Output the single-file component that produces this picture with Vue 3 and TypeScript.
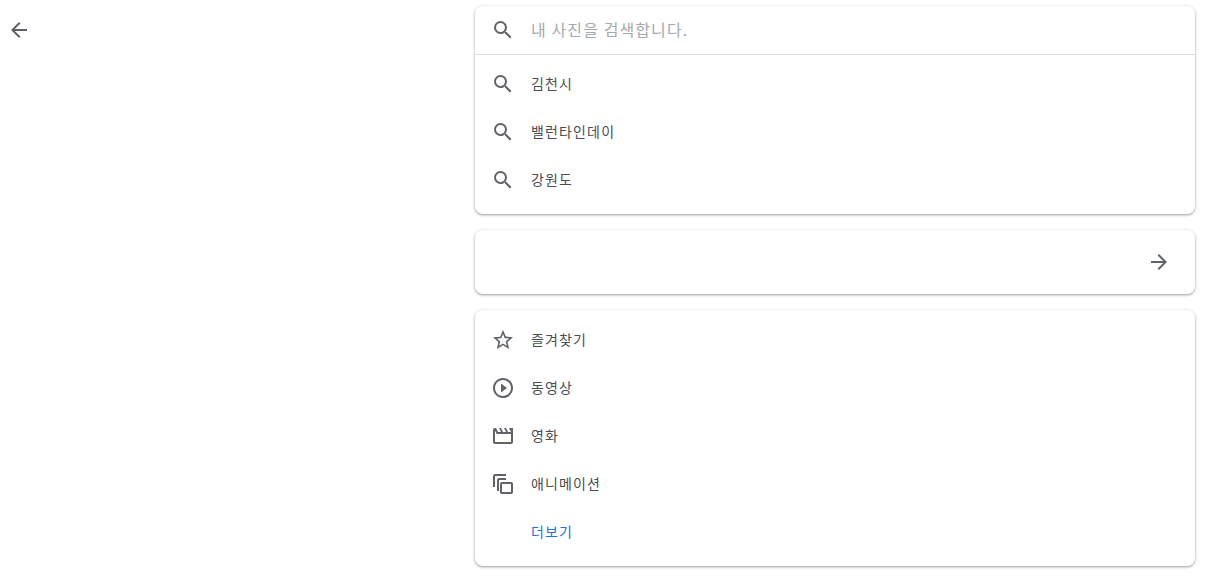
<template>
  <div class="page">
    <div class="back-col">
      <svg class="icon" viewBox="0 0 24 24"><path :d="ICONS.back" /></svg>
    </div>
    <div class="cards">
      <section class="card search-card">
        <div class="search-head">
          <svg class="icon" viewBox="0 0 24 24"><path :d="ICONS.search" /></svg>
          <span class="placeholder">내 사진을 검색합니다.</span>
        </div>
        <div class="list">
          <div v-for="term in recent" :key="term" class="row">
            <svg class="icon" viewBox="0 0 24 24"><path :d="ICONS.search" /></svg>
            <span class="label">{{ term }}</span>
          </div>
        </div>
      </section>

      <section class="card people-card">
        <div class="faces">
          <span v-for="n in 10" :key="n" class="face" />
        </div>
        <svg class="icon" viewBox="0 0 24 24"><path :d="ICONS.forward" /></svg>
      </section>

      <section class="card category-card">
        <div v-for="item in categories" :key="item.label" class="row">
          <svg class="icon" viewBox="0 0 24 24"><path :d="item.icon" fill-rule="evenodd" /></svg>
          <span class="label">{{ item.label }}</span>
        </div>
        <div class="row more">
          <span class="icon-gap" />
          <span class="label">더보기</span>
        </div>
      </section>
    </div>
  </div>
</template>

<script setup lang="ts">
const ICONS = {
  search:
    'M15.5 14h-.79l-.28-.27A6.471 6.471 0 0 0 16 9.5 6.5 6.5 0 1 0 9.5 16c1.61 0 3.09-.59 4.23-1.57l.27.28v.79l5 4.99L20.49 19l-4.99-5zm-6 0C7.01 14 5 11.99 5 9.5S7.01 5 9.5 5 14 7.01 14 9.5 11.99 14 9.5 14z',
  back: 'M20 11H7.83l5.59-5.59L12 4l-8 8 8 8 1.41-1.41L7.83 13H20v-2z',
  forward: 'M12 4l-1.41 1.41L16.17 11H4v2h12.17l-5.58 5.59L12 20l8-8z',
  star:
    'M22 9.24l-7.19-.62L12 2 9.19 8.63 2 9.24l5.46 4.73L5.82 21 12 17.27 18.18 21l-1.63-7.03L22 9.24zM12 15.4l-3.76 2.27 1-4.28-3.32-2.88 4.38-.38L12 6.1l1.71 4.04 4.38.38-3.32 2.88 1 4.28L12 15.4z',
  play:
    'M12 2C6.48 2 2 6.48 2 12s4.48 10 10 10 10-4.48 10-10S17.52 2 12 2zm0 18c-4.41 0-8-3.59-8-8s3.59-8 8-8 8 3.59 8 8-3.59 8-8 8zM10 7.5v9l6-4.5z',
  movie:
    'M4 6.47L5.76 10H20v8H4V6.47M22 4h-4l2 4h-3l-2-4h-2l2 4h-3l-2-4H8l2 4H7L5 4H4c-1.1 0-1.99.9-1.99 2L2 18c0 1.1.9 2 2 2h16c1.1 0 2-.9 2-2V4z',
  copies:
    'M2 4a2 2 0 0 1 2-2h11v2H4v11H2V4zm4 4a2 2 0 0 1 2-2h7v2H8v11H6V8zm5 2h9a2 2 0 0 1 2 2v8a2 2 0 0 1-2 2h-9a2 2 0 0 1-2-2v-8a2 2 0 0 1 2-2zm0 2v8h9v-8h-9z',
}

const recent = ['김천시', '밸런타인데이', '강원도']

const categories = [
  { label: '즐겨찾기', icon: ICONS.star },
  { label: '동영상', icon: ICONS.play },
  { label: '영화', icon: ICONS.movie },
  { label: '애니메이션', icon: ICONS.copies },
]
</script>

<style>
html,
body {
  background: #fff;
}
</style>

<style scoped>
.page {
  display: grid;
  grid-template-columns: 475px 720px;
  padding-bottom: 10px;
  font-family: "Noto Sans CJK KR", "Noto Sans", sans-serif;
  font-size: 14px;
  color: #4a4d50;
}

.back-col {
  padding: 18px 0 0 7px;
}

.cards {
  display: flex;
  flex-direction: column;
  gap: 16px;
  padding-top: 6px;
}

.card {
  background: #fff;
  border-radius: 8px;
  box-shadow: 0 1px 2px rgba(60, 64, 67, 0.34), 0 1px 3px 1px rgba(60, 64, 67, 0.15);
}

.icon {
  width: 24px;
  height: 24px;
  flex: none;
  display: block;
  fill: #5f6368;
}

.search-head {
  display: flex;
  align-items: center;
  gap: 16px;
  height: 48px;
  padding-left: 16px;
  border-bottom: 1px solid #dadce0;
}

.placeholder {
  font-size: 16px;
  line-height: 22px;
  letter-spacing: 1.1px;
  color: #a4a9ae;
  margin-top: -2px;
}

.label {
  letter-spacing: 1.15px;
  line-height: 20px;
  margin-top: -2px;
}

.list {
  padding: 5px 0 10px;
}

.row {
  display: flex;
  align-items: center;
  gap: 16px;
  height: 48px;
  padding-left: 16px;
}

.icon-gap {
  width: 24px;
  flex: none;
}

.more {
  color: #1a73e8;
}

.people-card {
  display: flex;
  align-items: center;
  justify-content: space-between;
  height: 64px;
  padding: 0 24px 0 16px;
}

.faces {
  display: flex;
  gap: 27px;
}

.face {
  width: 38px;
  height: 38px;
  border-radius: 50%;
  background: radial-gradient(circle, #fff 40%, #fefefe 65%, #fff 100%);
}

.category-card {
  padding: 6px 0 10px;
}
</style>
